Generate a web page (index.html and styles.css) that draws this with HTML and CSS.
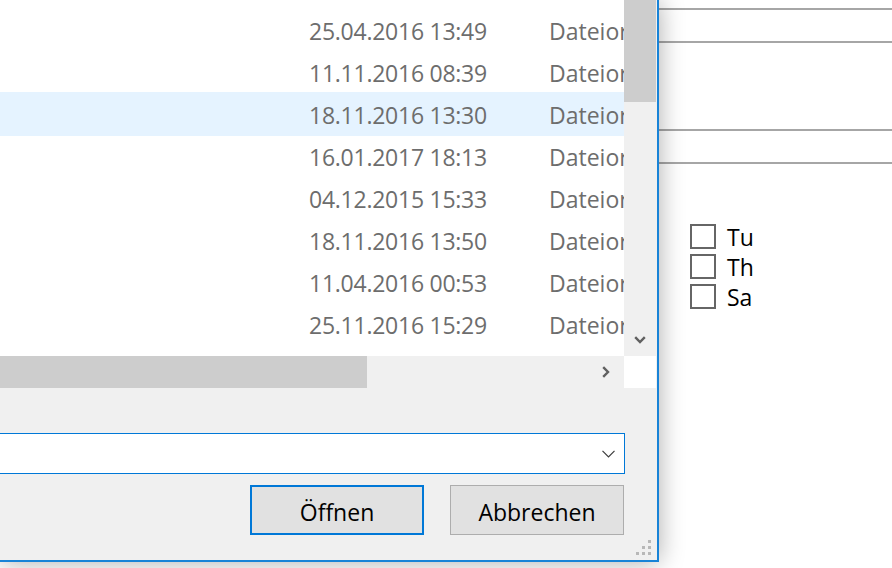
FILE: index.html
```html
<!DOCTYPE html>
<html lang="de">
<head>
<meta charset="utf-8">
<title>Öffnen</title>
<link rel="stylesheet" href="styles.css">
</head>
<body>
<div class="screen">
  <div class="dialog">
    <div class="list">
      <div class="rows">
        <div class="row"><span></span><span class="date">25.04.2016 13:49</span><span class="type">Dateiordner</span></div>
        <div class="row"><span></span><span class="date">11.11.2016 08:39</span><span class="type">Dateiordner</span></div>
        <div class="row selected"><span></span><span class="date">18.11.2016 13:30</span><span class="type">Dateiordner</span></div>
        <div class="row"><span></span><span class="date">16.01.2017 18:13</span><span class="type">Dateiordner</span></div>
        <div class="row"><span></span><span class="date">04.12.2015 15:33</span><span class="type">Dateiordner</span></div>
        <div class="row"><span></span><span class="date">18.11.2016 13:50</span><span class="type">Dateiordner</span></div>
        <div class="row"><span></span><span class="date">11.04.2016 00:53</span><span class="type">Dateiordner</span></div>
        <div class="row"><span></span><span class="date">25.11.2016 15:29</span><span class="type">Dateiordner</span></div>
      </div>
      <div class="vscroll">
        <div class="vthumb"></div>
        <div class="spacer"></div>
        <div class="sbtn">
          <svg width="12" height="8" viewBox="0 0 12 8"><path d="M1.2 1.2 L6 6 L10.8 1.2" fill="none" stroke="#606060" stroke-width="2.4"/></svg>
        </div>
      </div>
      <div class="hscroll">
        <div class="hthumb"></div>
        <div class="spacer"></div>
        <div class="hbtn">
          <svg width="8" height="12" viewBox="0 0 8 12"><path d="M1.2 1.2 L6 6 L1.2 10.8" fill="none" stroke="#606060" stroke-width="2.4"/></svg>
        </div>
      </div>
      <div class="corner"></div>
    </div>
    <div class="combo">
      <svg width="13" height="8" viewBox="0 0 13 8"><path d="M0.5 0.8 L6.5 6.8 L12.5 0.8" fill="none" stroke="#3c3c3c" stroke-width="1.2"/></svg>
    </div>
    <div class="buttons">
      <button class="btn primary">Öffnen</button>
      <button class="btn">Abbrechen</button>
    </div>
    <svg class="grip" width="15" height="15" viewBox="0 0 15 15">
      <rect x="12" y="0" width="3" height="3" fill="#b8b8b8"/>
      <rect x="6" y="6" width="3" height="3" fill="#b8b8b8"/>
      <rect x="12" y="6" width="3" height="3" fill="#b8b8b8"/>
      <rect x="0" y="12" width="3" height="3" fill="#b8b8b8"/>
      <rect x="6" y="12" width="3" height="3" fill="#b8b8b8"/>
      <rect x="12" y="12" width="3" height="3" fill="#b8b8b8"/>
    </svg>
  </div>
  <div class="backdrop">
    <div class="hline l1"></div>
    <div class="hline l2"></div>
    <div class="hline l3"></div>
    <div class="hline l4"></div>
    <div class="checks">
      <label class="check"><span class="box"></span><span class="lbl">Tu</span></label>
      <label class="check"><span class="box"></span><span class="lbl">Th</span></label>
      <label class="check"><span class="box"></span><span class="lbl">Sa</span></label>
    </div>
  </div>
</div>
</body>
</html>
```
FILE: styles.css
```css
html, body {
  margin: 0;
  padding: 0;
  background: #ffffff;
}
body {
  width: 892px;
  height: 568px;
  overflow: hidden;
  font-family: "Open Sans", "Noto Sans", sans-serif;
  font-size: 23px;
}
.screen {
  display: flex;
  width: 892px;
  height: 568px;
}
.dialog {
  position: relative;
  z-index: 1;
  box-sizing: border-box;
  width: 659px;
  height: 562px;
  flex: none;
  background: #f0f0f0;
  border-right: 2px solid #1883d7;
  border-bottom: 2px solid #1883d7;
  box-shadow: 0 0 24px rgba(0, 0, 0, 0.33);
}
.list {
  display: grid;
  grid-template-columns: 624px 32px;
  grid-template-rows: 356px 32px;
}
.rows {
  background: #ffffff;
  overflow: hidden;
  padding-top: 8px;
  box-sizing: border-box;
}
.row {
  display: grid;
  grid-template-columns: 309px 240px auto;
  height: 42px;
  box-sizing: border-box;
  padding-top: 2px;
  line-height: 42px;
  color: #6d6d6d;
  white-space: nowrap;
}
.row.selected {
  background: #e5f3ff;
  height: 44px;
  margin-bottom: -2px;
}
.date {
  letter-spacing: -0.25px;
}
.type {
  overflow: hidden;
}
.vscroll {
  background: #f0f0f0;
  display: flex;
  flex-direction: column;
}
.vthumb {
  height: 102px;
  background: #cdcdcd;
}
.spacer {
  flex: 1;
}
.sbtn {
  height: 33px;
  display: flex;
  align-items: center;
  justify-content: center;
}
.hscroll {
  background: #f0f0f0;
  display: flex;
}
.hthumb {
  width: 367px;
  background: #cdcdcd;
}
.hbtn {
  width: 32px;
  display: flex;
  align-items: center;
  padding-left: 10px;
  box-sizing: border-box;
}
.corner {
  background: #ffffff;
}
.combo {
  box-sizing: border-box;
  height: 41px;
  margin: 45px 32px 0 -2px;
  background: #ffffff;
  border: 1px solid #0078d7;
  display: flex;
  align-items: center;
  justify-content: flex-end;
  padding-right: 9px;
}
.buttons {
  display: flex;
  justify-content: flex-end;
  gap: 26px;
  margin: 11px 33px 0 0;
}
.btn {
  box-sizing: border-box;
  width: 174px;
  height: 50px;
  background: #e1e1e1;
  border: 1px solid #adadad;
  font-family: "Open Sans", "Noto Sans", sans-serif;
  font-size: 23px;
  color: #000000;
  padding: 3px 0 0 0;
  margin: 0;
}
.btn.primary {
  border: 2px solid #0078d7;
}
.grip {
  position: absolute;
  right: 6px;
  bottom: 5px;
}
.backdrop {
  flex: 1;
  background: #ffffff;
  display: flex;
  flex-direction: column;
}
.hline {
  height: 2px;
  background: #a6a6a6;
}
.l1 { margin-top: 8px; }
.l2 { margin-top: 31px; }
.l3 { margin-top: 86px; }
.l4 { margin-top: 31px; }
.checks {
  margin: 60px 0 0 31px;
  display: flex;
  flex-direction: column;
  gap: 5px;
}
.check {
  display: flex;
  align-items: center;
  gap: 11px;
  height: 25px;
}
.box {
  box-sizing: border-box;
  width: 26px;
  height: 25px;
  border: 2px solid #666666;
  background: #ffffff;
}
.lbl {
  color: #000000;
  line-height: 25px;
  padding-top: 2px;
}
```
